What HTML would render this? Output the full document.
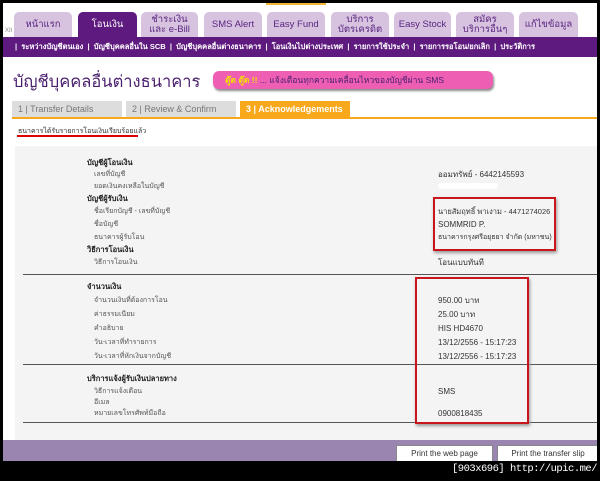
<!DOCTYPE html>
<html><head><meta charset="utf-8"><style>
*{margin:0;padding:0;box-sizing:border-box}
body{width:600px;height:481px;background:#000;position:relative;overflow:hidden;font-family:"Liberation Sans","Noto Sans CJK SC",sans-serif}
.pg{position:absolute;left:3px;top:3px;width:594px;height:458px;background:#fff;overflow:hidden}
.a{position:absolute;white-space:nowrap}
.tab{position:absolute;top:9px;height:26px;background:#d7c3df;border-radius:5px 5px 0 0;color:#5a2580;font-size:9.5px;text-align:center;line-height:10px;display:flex;align-items:center;justify-content:center}
.tab.on{background:#5e1a7e;color:#fff}
.bar{position:absolute;left:0;top:34px;width:594px;height:20px;background:#5e1a7e;color:#fff;font-size:7.5px;font-weight:bold;line-height:20px;padding-left:12px;white-space:nowrap;overflow:hidden}
.st{position:absolute;top:98px;height:16px;font-size:9px;line-height:16px;padding-left:6px;color:#777;background:#ddd}
.l{font-size:7px;color:#555;line-height:9px}
.b{font-size:7.5px;font-weight:bold;color:#222;line-height:9px}
.v{font-size:8px;color:#333;line-height:9px}
</style></head><body><div class="pg">
<div class="a" style="left:263px;top:-3px;width:60px;height:5px;background:#f0b63a"></div>
<div class="a" style="left:2px;top:25px;font-size:6px;color:#888">XII</div>
<div class="tab" style="left:11px;width:58px">หน้าแรก</div>
<div class="tab on" style="left:75px;width:59px">โอนเงิน</div>
<div class="tab" style="left:138px;width:57px">ชำระเงิน<br>และ e-Bill</div>
<div class="tab" style="left:201px;width:58px">SMS Alert</div>
<div class="tab" style="left:264px;width:58px">Easy Fund</div>
<div class="tab" style="left:328px;width:58px">บริการ<br>บัตรเครดิต</div>
<div class="tab" style="left:391px;width:57px">Easy Stock</div>
<div class="tab" style="left:453px;width:58px">สมัคร<br>บริการอื่นๆ</div>
<div class="tab" style="left:516px;width:59px">แก้ไขข้อมูล</div>
<div class="bar">|&nbsp; ระหว่างบัญชีตนเอง &nbsp;|&nbsp; บัญชีบุคคลอื่นใน SCB &nbsp;|&nbsp; บัญชีบุคคลอื่นต่างธนาคาร &nbsp;|&nbsp; โอนเงินไปต่างประเทศ &nbsp;|&nbsp; รายการใช้ประจำ &nbsp;|&nbsp; รายการรอโอน/ยกเลิก &nbsp;|&nbsp; ประวัติการ</div>
<div class="a" style="left:10px;top:66px;font-size:16.5px;color:#4a1f6e">บัญชีบุคคลอื่นต่างธนาคาร</div>
<div class="a" style="left:210px;top:68px;width:280px;height:18px;background:#ee5fb4;border-radius:6px;box-shadow:1px 2px 2px #888;font-size:8.5px;color:#4a1f6e;line-height:18px;padding-left:12px"><b style="color:#f3e000">ตู๊ด ตู๊ด !!</b> ... แจ้งเตือนทุกความเคลื่อนไหวของบัญชีผ่าน SMS</div>
<div class="st" style="left:9px;width:110px">1 | Transfer Details</div>
<div class="st" style="left:123px;width:110px">2 | Review &amp; Confirm</div>
<div class="st" style="left:237px;width:110px;background:#f7a81b;color:#fff;font-weight:bold">3 | Acknowledgements</div>
<div class="a" style="left:9px;top:114px;width:585px;height:2px;background:#f7a81b"></div>
<div class="a" style="left:15px;top:123px;font-size:7px;color:#333">ธนาคารได้รับรายการโอนเงินเรียบร้อยแล้ว</div>
<div class="a" style="left:14px;top:132px;width:121px;height:2px;background:#d00"></div>
<div class="a" style="left:12px;top:143px;width:582px;height:295px;background:#f4f4f4"></div>
<div class="a" style="left:20px;top:271px;width:574px;height:1px;background:#555"></div>
<div class="a" style="left:20px;top:361px;width:574px;height:1px;background:#555"></div>
<div class="a" style="left:20px;top:419px;width:574px;height:1px;background:#555"></div>
<div class="a b" style="left:84px;top:155px">บัญชีผู้โอนเงิน</div>
<div class="a l" style="left:91px;top:167px">เลขที่บัญชี</div>
<div class="a l" style="left:91px;top:179px">ยอดเงินคงเหลือในบัญชี</div>
<div class="a b" style="left:84px;top:191px">บัญชีผู้รับเงิน</div>
<div class="a l" style="left:91px;top:204px">ชื่อเรียกบัญชี - เลขที่บัญชี</div>
<div class="a l" style="left:91px;top:217px">ชื่อบัญชี</div>
<div class="a l" style="left:91px;top:230px">ธนาคารผู้รับโอน</div>
<div class="a b" style="left:84px;top:242px">วิธีการโอนเงิน</div>
<div class="a l" style="left:91px;top:255px">วิธีการโอนเงิน</div>
<div class="a v" style="left:435px;top:167px">ออมทรัพย์ - 6442145593</div>
<div class="a" style="left:435px;top:180px;width:60px;height:6px;background:#fff;border-radius:3px"></div>
<div class="a v" style="left:435px;top:204px;font-size:7.5px">นายสัมฤทธิ์ พาเงาม - 4471274026</div>
<div class="a v" style="left:435px;top:217px">SOMMRID P.</div>
<div class="a v" style="left:435px;top:230px;font-size:7px">ธนาคารกรุงศรีอยุธยา จำกัด (มหาชน)</div>
<div class="a v" style="left:435px;top:255px">โอนแบบทันที</div>
<div class="a" style="left:430px;top:194px;width:123px;height:54px;border:2px solid #c8161d;box-shadow:1px 2px 3px #999"></div>
<div class="a b" style="left:84px;top:279px">จำนวนเงิน</div>
<div class="a l" style="left:91px;top:293px">จำนวนเงินที่ต้องการโอน</div>
<div class="a l" style="left:91px;top:307px">ค่าธรรมเนียม</div>
<div class="a l" style="left:91px;top:321px">คำอธิบาย</div>
<div class="a l" style="left:91px;top:335px">วัน-เวลาที่ทำรายการ</div>
<div class="a l" style="left:91px;top:349px">วัน-เวลาที่หักเงินจากบัญชี</div>
<div class="a v" style="left:435px;top:293px">950.00 บาท</div>
<div class="a v" style="left:435px;top:307px">25.00 บาท</div>
<div class="a v" style="left:435px;top:321px">HIS HD4670</div>
<div class="a v" style="left:435px;top:335px">13/12/2556 - 15:17:23</div>
<div class="a v" style="left:435px;top:349px">13/12/2556 - 15:17:23</div>
<div class="a b" style="left:84px;top:371px">บริการแจ้งผู้รับเงินปลายทาง</div>
<div class="a l" style="left:91px;top:384px">วิธีการแจ้งเตือน</div>
<div class="a l" style="left:91px;top:395px">อีเมล</div>
<div class="a l" style="left:91px;top:406px">หมายเลขโทรศัพท์มือถือ</div>
<div class="a v" style="left:435px;top:384px">SMS</div>
<div class="a v" style="left:435px;top:406px">0900818435</div>
<div class="a" style="left:412px;top:274px;width:114px;height:147px;border:2px solid #c8161d;box-shadow:1px 2px 3px #999"></div>
<div class="a" style="left:0;top:437px;width:594px;height:21px;background:#9a84b0"></div>
<div class="a" style="left:393px;top:442px;width:97px;height:17px;background:#fff;border:1px solid #888;font-size:8px;text-align:center;line-height:15px;color:#333">Print the web page</div>
<div class="a" style="left:494px;top:442px;width:102px;height:17px;background:#fff;border:1px solid #888;font-size:8px;text-align:center;line-height:15px;color:#333">Print the transfer slip</div>
</div>
<div class="a" style="left:452px;top:463px;font-size:10.5px;color:#fff;font-family:'Liberation Mono',monospace;letter-spacing:-0.5px">[903x696] http://upic.me/</div>
</body></html>
